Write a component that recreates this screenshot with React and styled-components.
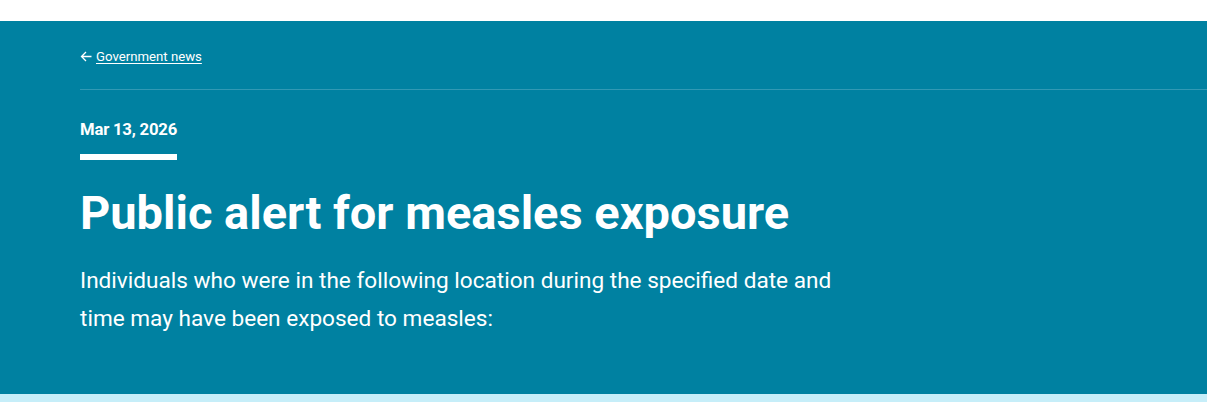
import React from 'react'
import styled, { createGlobalStyle } from 'styled-components'

const GlobalStyle = createGlobalStyle`
  body {
    margin: 0;
    background: #fff;
    font-family: Roboto, 'Noto Sans', sans-serif;
  }
`

const TopStrip = styled.div`
  height: 21px;
  background: #fff;
`

const Hero = styled.header`
  background: #0081a1;
  color: #fff;
  padding: 0 0 0 80px;
  height: 373px;
  box-sizing: border-box;
`

const Crumbs = styled.nav`
  height: 69px;
  padding-top: 2px;
  box-sizing: border-box;
  display: flex;
  align-items: center;
  gap: 4px;
  font-size: 13.2px;
  border-bottom: 1px solid #3199b4;
  a {
    color: #fff;
    text-decoration: underline;
    text-underline-offset: 2px;
  }
`

const Body = styled.div`
  padding-right: 80px;
`

const DateLine = styled.div`
  margin-top: 30px;
  font-size: 16.7px;
  line-height: 20px;
  font-weight: 700;
  letter-spacing: -0.2px;
  display: inline-block;
  padding-bottom: 14px;
  border-bottom: 6px solid #fff;
`

const Title = styled.h1`
  margin: 25px 0 0;
  font-size: 47px;
  line-height: 56px;
  font-weight: 700;
`

const Lead = styled.p`
  margin: 21px 0 0;
  max-width: 790px;
  font-size: 22.6px;
  line-height: 38px;
`

const Footer = styled.div`
  height: 8px;
  background: #c6eef9;
`

const BackArrow = () => (
  <svg width="12" height="11" viewBox="0 0 12 11" fill="none" stroke="#fff" strokeWidth="1.3">
    <path d="M11.5 5.5H1.5M6 1L1.5 5.5 6 10" />
  </svg>
)

const App = () => (
  <>
    <GlobalStyle />
    <TopStrip />
    <Hero>
      <Crumbs>
        <BackArrow />
        <a href="#">Government news</a>
      </Crumbs>
      <Body>
        <DateLine>Mar 13, 2026</DateLine>
        <Title>Public alert for measles exposure</Title>
        <Lead>
          Individuals who were in the following location during the specified date and time may have been exposed to measles:
        </Lead>
      </Body>
    </Hero>
    <Footer />
  </>
)

export default App
